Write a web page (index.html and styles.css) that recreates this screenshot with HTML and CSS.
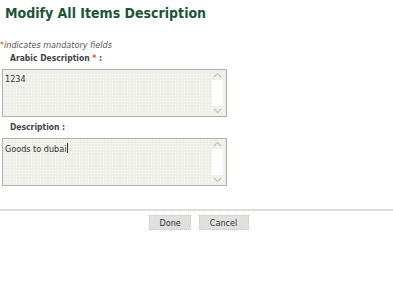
FILE: index.html
```html
<!DOCTYPE html>
<html lang="en">
<head>
    <meta charset="UTF-8">
    <title>Modify All Items Description</title>
    <link rel="stylesheet" href="styles.css">
</head>
<body>
    <h1 class="page-title">Modify All Items Description</h1>

    <p class="mandatory-note"><span class="req">*</span>indicates mandatory fields</p>

    <div class="form-row">
        <label class="field-label">Arabic Description <span class="req">*</span> :</label>
        <div class="text-box">
            <div class="text-value">1234</div>
            <div class="scroll-bar">
                <span class="scroll-btn">
                    <svg width="9" height="6" viewBox="0 0 9 6"><path d="M1 5 L4.5 1.5 L8 5" fill="none" stroke="#c4c4bc" stroke-width="1.2"/></svg>
                </span>
                <span class="scroll-track"></span>
                <span class="scroll-btn">
                    <svg width="9" height="6" viewBox="0 0 9 6"><path d="M1 1 L4.5 4.5 L8 1" fill="none" stroke="#c4c4bc" stroke-width="1.2"/></svg>
                </span>
            </div>
        </div>
    </div>

    <div class="form-row">
        <label class="field-label">Description :</label>
        <div class="text-box">
            <div class="text-value">Goods to dubai<span class="caret"></span></div>
            <div class="scroll-bar">
                <span class="scroll-btn">
                    <svg width="9" height="6" viewBox="0 0 9 6"><path d="M1 5 L4.5 1.5 L8 5" fill="none" stroke="#c4c4bc" stroke-width="1.2"/></svg>
                </span>
                <span class="scroll-track"></span>
                <span class="scroll-btn">
                    <svg width="9" height="6" viewBox="0 0 9 6"><path d="M1 1 L4.5 4.5 L8 1" fill="none" stroke="#c4c4bc" stroke-width="1.2"/></svg>
                </span>
            </div>
        </div>
    </div>

    <div class="form-actions">
        <button class="btn">Done</button>
        <button class="btn">Cancel</button>
    </div>
</body>
</html>
```

FILE: styles.css
```css
body {
    margin: 0;
    padding: 0;
    background: #fff;
    font-family: "DejaVu Sans Condensed", "DejaVu Sans", sans-serif;
    color: #333;
}

.page-title {
    margin: 0;
    padding: 4px 0 0 5px;
    font-size: 14px;
    line-height: 18px;
    color: #1d5436;
}

.mandatory-note {
    margin: 18px 0 0 0;
    font-size: 9px;
    line-height: 11px;
    font-style: italic;
    color: #555;
}

.req {
    color: #e0502a;
}

.form-row {
    padding: 2px 0 0 2px;
}

.form-row + .form-row {
    padding-top: 5px;
}

.field-label {
    display: block;
    padding-left: 8px;
    margin-bottom: 5px;
    font-size: 8.5px;
    line-height: 11px;
    font-weight: bold;
    color: #444;
}

.text-box {
    display: flex;
    width: 223px;
    height: 46px;
    border: 1px solid #b4b0aa;
    background-color: #efefe9;
    background-image: radial-gradient(#fafaf7 0.6px, transparent 0.8px);
    background-size: 3px 3px;
}

.text-value {
    flex: 1;
    padding: 4px 2px;
    font-size: 9px;
    line-height: 11px;
    color: #333;
}

.caret {
    display: inline-block;
    width: 1px;
    height: 10px;
    margin-left: 1px;
    vertical-align: -1px;
    background: #333;
}

.scroll-bar {
    display: flex;
    flex-direction: column;
    width: 11px;
    margin-right: 3px;
}

.scroll-btn {
    display: flex;
    align-items: center;
    justify-content: center;
    height: 10px;
    background: #f0f0ea;
}

.scroll-track {
    flex: 1;
    background: #fff;
}

.form-actions {
    display: flex;
    justify-content: center;
    gap: 8px;
    margin-top: 23px;
    padding: 4px 0 0 4px;
    border-top: 2px solid #deded8;
}

.btn {
    font-family: "DejaVu Sans Condensed", "DejaVu Sans", sans-serif;
    font-size: 9px;
    height: 15px;
    padding: 0 10px;
    background: #e0e0de;
    border: 1px dotted #c8c8c4;
    color: #333;
    cursor: pointer;
}

.btn:first-child {
    width: 42px;
}

.btn:last-child {
    width: 50px;
}
```
